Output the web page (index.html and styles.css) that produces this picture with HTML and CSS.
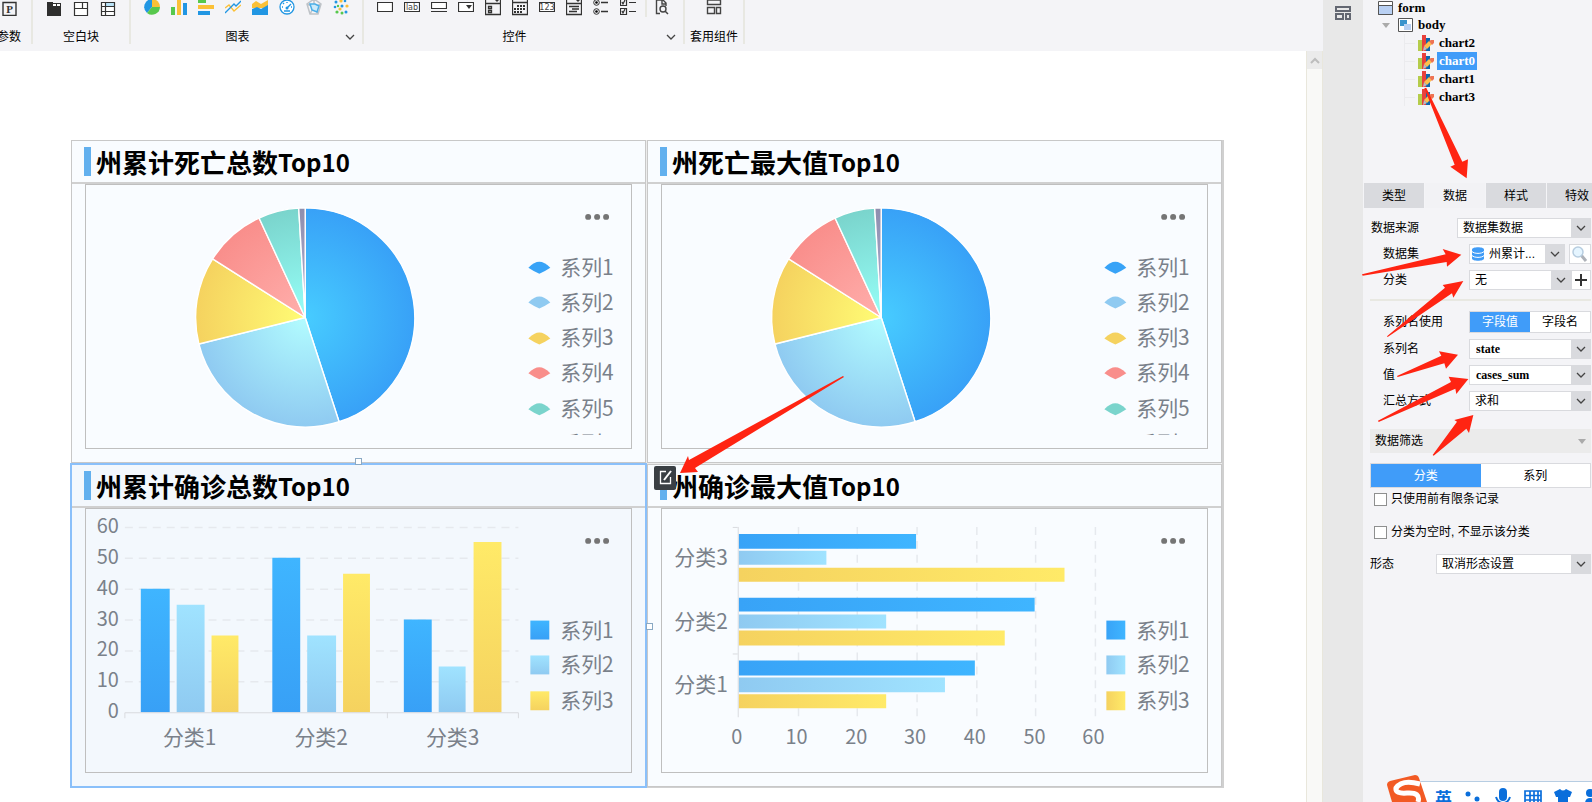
FILE: index.html
```html
<!DOCTYPE html>
<html lang="zh-CN">
<head>
<meta charset="utf-8">
<title>报表设计器</title>
<link rel="stylesheet" href="styles.css">
</head>
<body>
<svg class="defs" aria-hidden="true">
  <defs>
    <linearGradient id="v1" x2="0" y2="1"><stop stop-color="#3fb5ff"/><stop offset="1" stop-color="#38a0f6"/></linearGradient>
    <linearGradient id="v2" x2="0" y2="1"><stop stop-color="#a0e3ff"/><stop offset="1" stop-color="#8fcaf1"/></linearGradient>
    <linearGradient id="v3" x2="0" y2="1"><stop stop-color="#ffea68"/><stop offset="1" stop-color="#f5d25f"/></linearGradient>
    <linearGradient id="h1"><stop stop-color="#38a3f7"/><stop offset="1" stop-color="#3fb5ff"/></linearGradient>
    <linearGradient id="h2"><stop stop-color="#8fcaf1"/><stop offset="1" stop-color="#a0e3ff"/></linearGradient>
    <linearGradient id="h3"><stop stop-color="#f5d25f"/><stop offset="1" stop-color="#ffea68"/></linearGradient>
    <radialGradient id="r1" gradientUnits="userSpaceOnUse" cx="220" cy="133" r="110"><stop stop-color="#47ccff"/><stop offset="1" stop-color="#38a1f7"/></radialGradient>
    <radialGradient id="r2" gradientUnits="userSpaceOnUse" cx="220" cy="133" r="110"><stop stop-color="#b2fcff"/><stop offset="1" stop-color="#8fcaf1"/></radialGradient>
    <radialGradient id="r3" gradientUnits="userSpaceOnUse" cx="220" cy="133" r="110"><stop stop-color="#fffc75"/><stop offset="1" stop-color="#f5d25f"/></radialGradient>
    <radialGradient id="r4" gradientUnits="userSpaceOnUse" cx="220" cy="133" r="110"><stop stop-color="#ffafac"/><stop offset="1" stop-color="#f98e8b"/></radialGradient>
    <radialGradient id="r5" gradientUnits="userSpaceOnUse" cx="220" cy="133" r="110"><stop stop-color="#96fff8"/><stop offset="1" stop-color="#7ad4cc"/></radialGradient>
    <radialGradient id="r6" gradientUnits="userSpaceOnUse" cx="220" cy="133" r="110"><stop stop-color="#b0b0d4"/><stop offset="1" stop-color="#8e8eae"/></radialGradient>
    <clipPath id="legend-clip"><rect width="547" height="251"/></clipPath>
    <path id="mark" d="M-11 0Q-5-6 0-6Q5-6 11 0Q5 4 0 6Q-5 4-11 0Z"/>
    <g id="more" fill="#757575"><circle cx="504" cy="32" r="3"/><circle cx="513" cy="32" r="3"/><circle cx="522" cy="32" r="3"/></g>
    <g id="pie" stroke="#fff" stroke-width="1.4" stroke-linejoin="round">
      <path fill="url(#r1)" d="M220 133V23A110 110 0 0 1 254 237.6Z"/>
      <path fill="url(#r2)" d="M220 133L254 237.6A110 110 0 0 1 113.3 159.6Z"/>
      <path fill="url(#r3)" d="M220 133L113.3 159.6A110 110 0 0 1 127.1 74.1Z"/>
      <path fill="url(#r4)" d="M220 133L127.1 74.1A110 110 0 0 1 173.7 33.2Z"/>
      <path fill="url(#r5)" d="M220 133L173.7 33.2A110 110 0 0 1 213.5 23.2Z"/>
      <path fill="url(#r6)" d="M220 133L213.5 23.2A110 110 0 0 1 220 23Z"/>
    </g>
    <g id="chart-icon"><path fill="#b5cc4b" d="M0 5h4v11H0z"/><path fill="#0c68ae" d="M8 3h4v13H8z"/><path fill="#e8413c" d="M4 0h4v16H4z"/><path fill="#fcc04d" d="M6 11l5-5 3 3-5 5z"/><path fill="#ee7352" d="M11 6l2-1h3v3l-2 2z"/><path fill="#b9bcc4" d="M6 11l3 3-4 2z"/></g>
    <path id="chev" fill="none" stroke="#444" stroke-width="1.3" d="M1 1l4 4 4-4"/>
  </defs>
</svg>
<div class="app">
  <div class="workspace">
    <header class="ribbon">
      <section class="group g-param">
        <div class="icons">
          <svg viewBox="0 0 16 16"><path fill="none" stroke="#333" stroke-width="1.4" d="M2 2.500h13v13H2z"/><text class="glyph-p" x="8.500" y="13">P</text></svg>
        </div>
        <div class="caption"><span>参数</span></div>
      </section>
      <section class="group g-block">
        <div class="icons">
          <svg viewBox="0 0 16 16"><path fill="#2e2e2e" d="M1 2h6v1h8v13H1z"/><path fill="#fff" d="M7 4h3v2H7zM11 4h3v2h-3z"/></svg>
          <svg viewBox="0 0 16 16"><path fill="#fff" stroke="#333" stroke-width="1.2" d="M1.500 2.500h13v13h-13zM1.500 8.500h13M9.500 2.500v6"/></svg>
          <svg viewBox="0 0 16 16"><path fill="#fff" d="M1 2h14v14H1z"/><path fill="#b9e3f8" d="M6 2h9v4H6z"/><path fill="none" stroke="#333" stroke-width="1.200" d="M1.500 2.500h13v13h-13zM1.500 6.500h13M1.500 11.500h13M5.500 2.500v13"/></svg>
        </div>
        <div class="caption"><span>空白块</span></div>
      </section>
      <section class="group g-chart">
        <div class="icons">
          <svg viewBox="0 0 16 16"><path fill="#2196e3" d="M8 7L3 13A8 8 0 0 1 8-1z"/><path fill="#fbc037" d="M8 7V-1A8 8 0 0 1 16 7z"/><path fill="#57c84d" d="M8 7h8A8 8 0 0 1 3 13z"/></svg>
          <svg viewBox="0 0 16 16"><path fill="#57c84d" d="M0 7h4v8H0z"/><path fill="#fbc037" d="M6 0h4v15H6z"/><path fill="#2196e3" d="M12 3h4v12h-4z"/></svg>
          <svg viewBox="0 0 16 16"><path fill="#57c84d" d="M0 0h8v3H0z"/><path fill="#fbc037" d="M0 5h16v4H0z"/><path fill="#2196e3" d="M0 11h12v4H0z"/></svg>
          <svg viewBox="0 0 16 16"><path fill="none" stroke="#fbc037" stroke-width="1.300" d="M0 8l4-3 5 6 7-6"/><path fill="none" stroke="#2196e3" stroke-width="1.300" d="M0 13l5-5 4-4 2 2 5-5"/></svg>
          <svg viewBox="0 0 16 16"><path fill="#fbc037" d="M0 4l4-3 5 3 7-4v8H0z"/><path fill="#2196e3" d="M0 9l5-2 4 2 7-4v10H0z"/></svg>
          <svg viewBox="0 0 16 16"><circle cx="8" cy="7" r="7" fill="#fff" stroke="#2196e3" stroke-width="1.300"/><path fill="none" stroke="#2196e3" stroke-width="1.400" d="M8 8l4-4M3 7h1M12 7h1M8 2v1M4 3l1 1M5 11h6"/><circle cx="8" cy="8" r="1.500" fill="#2196e3"/></svg>
          <svg viewBox="0 0 16 16"><path fill="none" stroke="#bfc3c8" stroke-width="1.500" d="M8-1l7 5-3 10H4L1 4zM8-1v8M1 4l7 3 7-3M4 14l4-7 4 7"/><path fill="#cbeafa" stroke="#49aee8" stroke-width="1.500" d="M4 4l5 0 4 2-2 6-5-2z"/></svg>
          <svg viewBox="0 0 16 16"><g fill="#fbc037"><circle cx="8" cy="1" r="1.600"/><circle cx="14" cy="6" r="1.600"/><circle cx="7" cy="9" r="1.600"/></g><g fill="#2196e3"><circle cx="3" cy="2" r="1.500"/><circle cx="12" cy="1" r="1.300"/><circle cx="9" cy="6" r="1.500"/><circle cx="13" cy="12" r="1.500"/><circle cx="2" cy="7" r="1.300"/></g><g fill="#57c84d"><circle cx="4" cy="12" r="1.600"/><circle cx="9" cy="13" r="1.500"/><circle cx="5" cy="6" r="1.200"/></g></svg>
        </div>
        <div class="caption"><span>图表</span><button class="more" aria-label="更多图表"><svg viewBox="0 0 10 6"><use href="#chev"/></svg></button></div>
      </section>
      <section class="group g-control">
        <div class="icons">
          <svg viewBox="0 0 16 16"><path fill="#fff" stroke="#333" stroke-width="1.200" d="M.5 2.500h15v9H.5z"/></svg>
          <svg viewBox="0 0 16 16"><path fill="#fff" stroke="#333" stroke-width="1.200" d="M.5 2.500h15v9H.5z"/><text class="glyph" x="8" y="10">lab</text></svg>
          <svg viewBox="0 0 16 16"><path fill="#fff" stroke="#333" stroke-width="1.200" d="M.5 2.500h15v6H.5zM0 11.500h16"/></svg>
          <svg viewBox="0 0 16 16"><path fill="#fff" stroke="#333" stroke-width="1.200" d="M.5 2.500h15v9H.5z"/><path fill="#333" d="M8 5h6l-3 4z"/></svg>
          <svg viewBox="0 0 16 16"><path fill="none" stroke="#333" stroke-width="1.300" d="M.5-1v15.500h15V-1M.5 3.500h15M3.500 6.500h3v2h-3zM3.500 10.500h3v2h-3z"/><path fill="#333" d="M10 0h4l-2 2z"/></svg>
          <svg viewBox="0 0 16 16"><path fill="none" stroke="#333" stroke-width="1.300" d="M.5-1v15.500h15V-1M.5 2.500h15"/><path fill="none" stroke="#333" stroke-width="2" stroke-dasharray="2 1" d="M5 6h9M2 9h12M2 12h9"/></svg>
          <svg viewBox="0 0 16 16"><path fill="#fff" stroke="#333" stroke-width="1.200" d="M.5 2.500h15v9H.5z"/><text class="glyph" x="8" y="10">123</text></svg>
          <svg viewBox="0 0 16 16"><path fill="none" stroke="#333" stroke-width="1.300" d="M.5-1v15.500h15V-1M.5 3.500h15M3 6.500h10M6 9h7M3 11.500h8"/><path fill="#333" d="M10 0h4l-2 2z"/></svg>
          <svg viewBox="0 0 16 16"><path stroke="#333" stroke-width="1.300" d="M8 2.500h7M8 11.500h7"/><g fill="none" stroke="#333"><circle cx="3.500" cy="2.500" r="2.800"/><circle cx="3.500" cy="11.500" r="2.800"/></g><circle cx="3.500" cy="2.500" r="1.300"/><circle cx="3.500" cy="11.500" r="1.300"/></svg>
          <svg viewBox="0 0 16 16"><path fill="none" stroke="#333" stroke-width="1.200" d="M.5-1v6.500h6V-1M.5 8.500h6v6h-6zM9 2.500h7M9 11.500h7M2 2l1 2 2-4M2 11l1 2 2-4"/></svg>
          <i class="tick"></i>
          <svg viewBox="0 0 16 16"><path fill="none" stroke="#444" stroke-width="1.400" d="M6 13.500H2.500V0H9l3 3v3M8 0v4h4"/><circle cx="9" cy="9" r="3" fill="none" stroke="#444" stroke-width="1.400"/><path stroke="#444" stroke-width="1.500" d="M11 11l3 3"/></svg>
        </div>
        <div class="caption"><span>控件</span><button class="more" aria-label="更多控件"><svg viewBox="0 0 10 6"><use href="#chev"/></svg></button></div>
      </section>
      <section class="group g-suite">
        <div class="icons">
          <svg viewBox="0 0 16 16"><path fill="none" stroke="#444" stroke-width="1.400" d="M1.500 0h13v4.500h-13zM1.500 7.500h7v6h-7zM10.500 7.500h4v6h-4z"/></svg>
        </div>
        <div class="caption"><span>套用组件</span></div>
      </section>
    </header>
    <div class="stage">
      <main class="canvas">
        <div class="board">
          <article class="panel">
            <h2>州累计死亡总数<span>Top10</span></h2>
            <svg class="chart" viewBox="0 0 547 264">
              <use href="#pie"/><use href="#more"/>
              <g class="lab" clip-path="url(#legend-clip)">
                <use href="#mark" x="455" y="83" fill="#38a3f7"/><text x="476" y="90">系列1</text>
                <use href="#mark" x="455" y="118" fill="#8fcaf1"/><text x="476" y="125">系列2</text>
                <use href="#mark" x="455" y="154" fill="#f5d25f"/><text x="476" y="161">系列3</text>
                <use href="#mark" x="455" y="189" fill="#f98e8b"/><text x="476" y="196">系列4</text>
                <use href="#mark" x="455" y="225" fill="#7ad4cc"/><text x="476" y="232">系列5</text>
                <text x="476" y="267">系列6</text>
              </g>
            </svg>
          </article>
          <article class="panel">
            <h2>州死亡最大值<span>Top10</span></h2>
            <svg class="chart" viewBox="0 0 547 264">
              <use href="#pie"/><use href="#more"/>
              <g class="lab" clip-path="url(#legend-clip)">
                <use href="#mark" x="455" y="83" fill="#38a3f7"/><text x="476" y="90">系列1</text>
                <use href="#mark" x="455" y="118" fill="#8fcaf1"/><text x="476" y="125">系列2</text>
                <use href="#mark" x="455" y="154" fill="#f5d25f"/><text x="476" y="161">系列3</text>
                <use href="#mark" x="455" y="189" fill="#f98e8b"/><text x="476" y="196">系列4</text>
                <use href="#mark" x="455" y="225" fill="#7ad4cc"/><text x="476" y="232">系列5</text>
                <text x="476" y="267">系列6</text>
              </g>
            </svg>
          </article>
          <article class="panel selected">
            <h2>州累计确诊总数<span>Top10</span></h2>
            <svg class="chart" viewBox="0 0 547 264">
              <path class="grid" d="M39 18.500h395M39 49.500h395M39 80.500h395M39 111.500h395M39 142.500h395M39 173.500h395"/>
              <g fill="url(#v1)"><path d="M55 80h29v124H55z"/><path d="M187 49h28v155h-28z"/><path d="M319 111h28v93h-28z"/></g>
              <g fill="url(#v2)"><path d="M91 96h28v108H91z"/><path d="M222 127h29v77h-29z"/><path d="M354 158h27v46h-27z"/></g>
              <g fill="url(#v3)"><path d="M126 127h27v77h-27z"/><path d="M258 65h27v139h-27z"/><path d="M389 33h28v171h-28z"/></g>
              <path class="axis" d="M39 210v-5.500h395v5.500M302.500 204v6"/>
              <g class="num end"><text x="33" y="24">60</text><text x="33" y="55">50</text><text x="33" y="86">40</text><text x="33" y="117">30</text><text x="33" y="148">20</text><text x="33" y="179">10</text><text x="33" y="210">0</text></g>
              <g class="lab mid"><text x="104" y="237">分类1</text><text x="236" y="237">分类2</text><text x="368" y="237">分类3</text></g>
              <use href="#more"/>
              <g class="lab"><rect x="446" y="112" width="19" height="19" fill="url(#v1)"/><text x="476" y="129">系列1</text><rect x="446" y="147" width="19" height="19" fill="url(#v2)"/><text x="476" y="164">系列2</text><rect x="446" y="183" width="19" height="19" fill="url(#v3)"/><text x="476" y="200">系列3</text></g>
            </svg>
            <i class="handle top"></i><i class="handle right"></i>
          </article>
          <article class="panel">
            <h2>州确诊最大值<span>Top10</span></h2>
            <svg class="chart" viewBox="0 0 547 264">
              <path class="grid" d="M137 18v191M196 18v191M256 18v191M316 18v191M375 18v191M435 18v191"/>
              <g fill="url(#h1)"><path d="M77 25h178v15H77z"/><path d="M77 89h297v14H77z"/><path d="M77 152h237v15H77z"/></g>
              <g fill="url(#h2)"><path d="M77 42h88v14H77z"/><path d="M77 106h148v14H77z"/><path d="M77 169h207v15H77z"/></g>
              <g fill="url(#h3)"><path d="M77 59h327v14H77z"/><path d="M77 122h267v15H77z"/><path d="M77 186h148v14H77z"/></g>
              <path class="axis" d="M76.500 18v191M71 18.500h5M71 145.500h5"/>
              <g class="lab end"><text x="66" y="56">分类3</text><text x="66" y="120">分类2</text><text x="66" y="184">分类1</text></g>
              <g class="num mid"><text x="75" y="236">0</text><text x="135" y="236">10</text><text x="195" y="236">20</text><text x="254" y="236">30</text><text x="314" y="236">40</text><text x="374" y="236">50</text><text x="433" y="236">60</text></g>
              <use href="#more"/>
              <g class="lab"><rect x="446" y="112" width="19" height="19" fill="url(#h1)"/><text x="476" y="129">系列1</text><rect x="446" y="147" width="19" height="19" fill="url(#h2)"/><text x="476" y="164">系列2</text><rect x="446" y="183" width="19" height="19" fill="url(#h3)"/><text x="476" y="200">系列3</text></g>
            </svg>
            <button class="edit" aria-label="编辑"><svg viewBox="0 0 21 24"><path fill="none" stroke="#fff" stroke-width="1.300" d="M11 5.500H5.500v12h10V11"/><path stroke="#fff" stroke-width="2" d="M9 14l7-9"/></svg></button>
          </article>
          <svg class="pointer" viewBox="0 0 166 98"><path fill="#ff2412" d="M163 0L9 84l-1-4-8 17 18-1-3-4L164 1z"/></svg>
        </div>
      </main>
      <div class="scroll"><button aria-label="向上滚动"><svg viewBox="0 0 10 7"><path fill="none" stroke="#bdbdbd" stroke-width="2" d="M1 6l4-4 4 4"/></svg></button></div>
    </div>
  </div>
  <nav class="rail"><button aria-label="组件"><svg viewBox="0 0 16 14"><path fill="none" stroke="#636771" stroke-width="2" d="M1 1h14v4H1zM1 8h7v5H1zM11 8h4v5h-4z"/></svg></button></nav>
  <aside class="side">
    <ul class="tree">
      <li class="root"><svg class="box" viewBox="0 0 15 15"><path fill="#fff" stroke="#555" d="M.5.5h14v13H.5z"/><path fill="#b9d0f3" stroke="#555" d="M.5 4.500h14v9H.5z"/></svg><span>form</span></li>
      <li class="lvl1"><svg class="fold" viewBox="0 0 8 5"><path fill="#aaa" d="M0 0h8L4 5z"/></svg><svg class="box" viewBox="0 0 15 15"><path fill="#fff" stroke="#555" d="M.5.5h14v13H.5z"/><path fill="#3a93cc" d="M2 2h7v6H2z"/><path fill="#b9d0f3" d="M6 6h7v6H6z"/></svg><span>body</span></li>
      <li class="leaf"><svg viewBox="0 0 16 16"><use href="#chart-icon"/></svg><span>chart2</span></li>
      <li class="leaf"><svg viewBox="0 0 16 16"><use href="#chart-icon"/></svg><span class="on">chart0</span></li>
      <li class="leaf"><svg viewBox="0 0 16 16"><use href="#chart-icon"/></svg><span>chart1</span></li>
      <li class="leaf"><svg viewBox="0 0 16 16"><use href="#chart-icon"/></svg><span>chart3</span></li>
    </ul>
    <div class="tabs"><button>类型</button><button class="on">数据</button><button>样式</button><button>特效</button></div>
    <form class="props">
      <div class="row r-source"><label for="src">数据来源</label><div class="combo"><select id="src"><option>数据集数据</option></select><svg viewBox="0 0 10 6"><use href="#chev"/></svg></div></div>
      <div class="row sub"><label for="set">数据集</label><div class="combo data"><svg class="db" viewBox="0 0 12 14"><path fill="#409cf7" d="M0 2.500C0-.5 12-.5 12 2.500V11.500C12 14.500 0 14.500 0 11.500z"/><path fill="none" stroke="#fff" d="M0 4.500C2 7 10 7 12 4.500M0 8.500C2 11 10 11 12 8.500"/></svg><select id="set"><option>州累计...</option></select><svg viewBox="0 0 10 6"><use href="#chev"/></svg></div><button class="tool search" type="button" aria-label="预览"><svg viewBox="0 0 16 16"><path stroke="#aeb2b9" stroke-width="3" d="M9 9l5 6"/><circle cx="6" cy="6" r="5" fill="#e5f5ff" stroke="#b7cde0" stroke-width="1.500"/></svg></button></div>
      <div class="row sub"><label for="cat">分类</label><div class="combo"><select id="cat"><option>无</option></select><svg viewBox="0 0 10 6"><use href="#chev"/></svg></div><button class="tool" type="button" aria-label="添加"><svg viewBox="0 0 12 12"><path stroke="#333" stroke-width="2" d="M6 0v12M0 6h12"/></svg></button></div>
      <hr>
      <div class="row sub tall"><span class="name">系列名使用</span><div class="switch"><button type="button" class="on">字段值</button><button type="button">字段名</button></div></div>
      <div class="row sub"><label for="ser">系列名</label><div class="combo code"><select id="ser"><option>state</option></select><svg viewBox="0 0 10 6"><use href="#chev"/></svg></div></div>
      <div class="row sub"><label for="val">值</label><div class="combo code"><select id="val"><option>cases_sum</option></select><svg viewBox="0 0 10 6"><use href="#chev"/></svg></div></div>
      <div class="row sub"><label for="agg">汇总方式</label><div class="combo"><select id="agg"><option>求和</option></select><svg viewBox="0 0 10 6"><use href="#chev"/></svg></div></div>
      <button class="section" type="button"><span>数据筛选</span><svg viewBox="0 0 8 5"><path fill="#aaa" d="M0 0h8L4 5z"/></svg></button>
      <div class="switch wide"><button type="button" class="on">分类</button><button type="button">系列</button></div>
      <label class="check"><input type="checkbox">只使用前有限条记录</label>
      <label class="check second"><input type="checkbox">分类为空时, 不显示该分类</label>
      <div class="row r-shape"><label for="shape">形态</label><div class="combo"><select id="shape"><option>取消形态设置</option></select><svg viewBox="0 0 10 6"><use href="#chev"/></svg></div></div>
    </form>
    <svg class="arrows" viewBox="0 0 229 600"><g fill="#ff2412">
      <path transform="translate(-3 0) scale(.33333)" d="M193 264L284 494L271 500L320 535L324 478L307 485L199 264z"/>
      <g transform="translate(-8 240) scale(.33333)">
        <path d="M21 103L272 43L263 27L319 44L276 80L275 66L23 107z"/>
        <path d="M96 289L270 143L263 135L325 123L295 173L291 160L98 291z"/>
        <path d="M126 408L259 347L252 334L309 344L273 386L268 370L128 411z"/>
        <path d="M69 542L288 426L281 410L340 417L304 462L301 446L71 546z"/>
        <path d="M233 645L306 545L298 540L355 525L342 579L334 566L236 647z"/>
      </g>
    </g></svg>
  </aside>
  <div class="ime">
    <svg class="logo" viewBox="0 0 40 27"><path fill="#f25a24" d="M3 6L28 0q3 0 4 3l8 24H5L0 10q0-3 3-4z"/><path fill="none" stroke="#fff" stroke-width="5" d="M33 9Q15 4 9 13Q8 19 20 18Q34 17 31 27"/></svg>
    <div class="bar"><b>英</b>
      <svg viewBox="0 0 18 16"><g fill="#0a6edb"><circle cx="4" cy="6" r="2.500"/><circle cx="13" cy="11" r="2.500"/></g></svg>
      <svg viewBox="0 0 18 16"><rect x="5" y="0" width="8" height="13" rx="4" fill="#0a6edb"/><path fill="none" stroke="#0a6edb" stroke-width="2" d="M2 9q2 6 7 6t7-6"/></svg>
      <svg viewBox="0 0 18 16"><path fill="none" stroke="#0a6edb" stroke-width="1.700" d="M1 3h16v14H1zM1 7.500h16M1 12h16M6 3v12M10 3v12M14 3v12"/></svg>
      <svg viewBox="0 0 18 16"><path fill="#0a6edb" d="M0 4l6-3q3 3 6 0l6 3-2 5h-2v7H4V9H2z"/></svg>
      <svg viewBox="0 0 18 16"><circle cx="6" cy="5" r="4" fill="#0a6edb"/><path fill="#0a6edb" d="M1 16q0-6 5-6t6 6z"/></svg>
    </div>
  </div>
</div>
</body>
</html>
```
FILE: styles.css
```css
* { box-sizing: border-box; }
body { margin: 0; font: 12px/14px "Liberation Sans", "Noto Sans CJK SC", sans-serif; color: #000; background: #fff; }
button, select, input { font: inherit; color: inherit; margin: 0; }
button { border: 0; padding: 0; background: none; display: flex; align-items: center; justify-content: center; }
svg { display: block; flex: none; }
.defs { position: absolute; width: 0; height: 0; }
.app { position: relative; display: flex; height: 100vh; overflow: hidden; }
.workspace { flex: 1; min-width: 0; display: flex; flex-direction: column; }

.ribbon { display: flex; height: 51px; flex: none; background: #f4f4f7; overflow: hidden; }
.group { height: 44px; display: flex; flex-direction: column; justify-content: space-between; border-right: 2px solid #e8e8e2; flex: none; }
.icons { display: flex; gap: 11px; height: 17px; padding-left: 13px; }
.icons svg { width: 16px; height: 16px; }
.caption { display: flex; align-items: center; height: 15px; }
.caption span { flex: 1; text-align: center; white-space: nowrap; }
.more { width: 12px; height: 14px; margin-right: 6px; }
.more svg { width: 10px; height: 6px; }
.g-param { width: 33px; }
.g-param .icons { padding-left: 1px; }
.g-param .caption { justify-content: flex-end; padding-right: 10px; }
.g-param .caption span { flex: none; }
.g-block { width: 98px; }
.g-chart { width: 233px; }
.g-control { width: 321px; }
.g-suite { width: 60px; }
.g-suite .icons { padding-left: 21px; }
.tick { width: 2px; margin: 0 -4px 0 -2px; background: #e8e8e2; }
.glyph { font: 8px "DejaVu Sans", sans-serif; text-anchor: middle; fill: #444; }
.glyph-p { font: bold 11px "Liberation Serif", serif; text-anchor: middle; fill: #333; }

.stage { flex: 1; display: flex; min-height: 0; }
.canvas { flex: 1; min-width: 0; padding: 89px 82px 0 71px; }
.scroll { width: 17px; flex: none; background: #f9f9f7; border: solid #e9e7dc; border-width: 0 1px; }
.scroll button { width: 100%; height: 18px; background: #ebebeb; }
.scroll svg { width: 10px; height: 7px; }

.board { position: relative; display: grid; grid-template-columns: 1fr 1fr; gap: 1px; border-right: 2px solid #d0d0d0; border-bottom: 1px solid #d0d0d0; background: #ececec; }
.panel { position: relative; background: #f9fcff; border: 1px solid #c8c8c8; padding-bottom: 13px; }
.panel h2 { display: flex; align-items: center; margin: 0; height: 43px; padding-left: 12px; border-bottom: 2px solid #d0d0d0; font: bold 26px/40px "Noto Sans CJK SC", sans-serif; }
.panel h2::before { content: ""; width: 7px; height: 29px; margin-right: 5px; background: #62b0ee; }
.panel h2 span { font-size: 24px; }
.chart { width: calc(100% - 26px); height: auto; margin: 0 13px; border: 1px solid #bfbfbf; }
.selected { background: #f3f8fd; outline: 2px solid #8ac0fa; outline-offset: -1px; z-index: 1; }
.handle { position: absolute; width: 7px; height: 7px; background: #fff; border: 1px solid #8aa9c4; }
.handle.top { top: -7px; left: 50%; margin-left: -4px; }
.handle.right { right: -8px; top: 50%; margin-top: -3px; }
.edit { position: absolute; left: 6px; top: 1px; width: 22px; height: 24px; border-radius: 2px; background: #3a3f44; }
.edit svg { width: 21px; height: 24px; }
.pointer { position: absolute; z-index: 2; left: 609px; top: 236px; width: 166px; height: 98px; }
.lab text { font: 21px "Noto Sans CJK SC", sans-serif; fill: #7a818a; }
.num text { font: 20px "Noto Sans CJK SC", sans-serif; fill: #7a818a; }
.end text { text-anchor: end; }
.mid text { text-anchor: middle; }
.grid { stroke: #e6e9ee; stroke-width: 1.500; stroke-dasharray: 8 6; }
.axis { fill: none; stroke: #d9dbdf; }

.rail { width: 40px; flex: none; background: #e8e8e8; padding: 6px 0 0 12px; }
.rail svg { width: 16px; height: 14px; }
.side { position: relative; width: 229px; flex: none; background: #f4f4f7; }
.tree { list-style: none; margin: 0; padding: 0 0 0 15px; height: 183px; font: bold 13px/18px "Liberation Serif", serif; }
.tree li { display: flex; align-items: center; height: 18px; gap: 3px; }
.tree li.root { height: 16px; align-items: flex-end; }
.tree .root span { line-height: 17px; }
.tree span { padding: 0 2px; }
.tree .box { width: 15px; height: 15px; }
.tree .fold { width: 8px; height: 5px; margin-right: 5px; }
.tree .lvl1 { padding-left: 4px; }
.tree .leaf { padding-left: 26px; }
.leaf::before { content: ""; width: 10px; height: 18px; border-left: 1px solid #ebebee; background: linear-gradient(#ebebee, #ebebee) center / 100% 1px no-repeat; }
.leaf svg { width: 16px; height: 16px; }
.tree .on { background: #409cf9; color: #fff; }

.tabs { display: flex; gap: 1px; height: 25px; padding-left: 1px; overflow: hidden; }
.tabs button { flex: 0 0 60px; background: #d9dade; }
.tabs .on { background: #f2f2f5; }
.props { padding: 10px 1px 0 7px; display: flex; flex-direction: column; }
.row { display: flex; align-items: center; height: 20px; margin-bottom: 6px; }
.row > label, .row > .name { flex: none; width: 87px; padding-left: 1px; white-space: nowrap; }
.row.sub { padding-left: 12px; }
.row.tall { height: 22px; }
.combo { flex: 1; min-width: 0; display: grid; grid-template-columns: 1fr 18px; height: 20px; background: #fff; border: 1px solid #d9dade; }
.combo select { grid-area: 1 / 1 / 2 / 3; width: 100%; min-width: 0; appearance: none; border: 0; border-radius: 0; padding: 0 20px 0 5px; background: linear-gradient(#d9dade, #d9dade) right / 19px 100% no-repeat; }
.combo > svg { grid-area: 1 / 2; align-self: center; justify-self: center; width: 10px; height: 6px; pointer-events: none; z-index: 1; }
.combo.data > .db { grid-area: 1 / 1; justify-self: start; margin-left: 2px; width: 12px; height: 14px; }
.combo.data select { padding-left: 19px; }
.combo.code select { font: bold 12px/14px "Liberation Serif", serif; padding-left: 6px; }
.tool { width: 20px; height: 20px; flex: none; background: #fff; border: 1px solid #d9dade; }
.tool svg { width: 12px; height: 12px; }
.tool.search { width: 22px; margin-left: 4px; }
.search svg { width: 16px; height: 16px; }
hr { width: 100%; margin: 3px 0 10px; border: 0; border-top: 2px solid #e8e8e2; }
.switch { flex: 1; display: grid; grid-template-columns: 1fr 1fr; height: 22px; background: #fff; border: 1px solid #d9dade; }
.switch .on { background: #409cf9; color: #fff; }
.switch.wide { flex: none; height: 25px; }
.section { justify-content: space-between; height: 24px; margin: 12px 0 10px; padding: 0 5px; background: #ebebeb; }
.section svg { width: 8px; height: 5px; }
.check { display: flex; align-items: center; gap: 4px; height: 14px; margin: 4px 0 0 4px; }
.check input { appearance: none; width: 13px; height: 13px; border: 1px solid #8e8f8f; background: #fff; }
.check.second { margin: 19px 0 15px 4px; }
.r-shape > label { width: 66px; padding-left: 0; }
.arrows { position: absolute; left: 0; top: 0; width: 229px; height: 600px; overflow: visible; pointer-events: none; }

.ime { position: absolute; right: 0; bottom: 0; width: 205px; height: 27px; overflow: hidden; }
.bar { position: absolute; left: 30px; right: 0; top: 6px; height: 26px; display: flex; gap: 12px; padding: 6px 0 0 18px; background: #fff; border-top: 1px solid #b7cde2; }
.bar b { font: bold 17px/20px "Noto Sans CJK SC", sans-serif; color: #0a6edb; }
.bar svg { width: 18px; height: 16px; }
.logo { position: absolute; z-index: 1; left: 0; top: 0; width: 40px; height: 27px; }
```
